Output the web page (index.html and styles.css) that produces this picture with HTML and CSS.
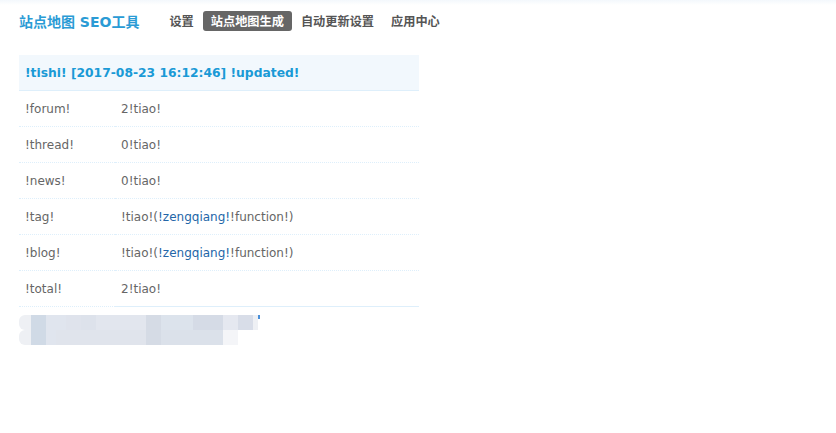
FILE: index.html
```html
<!DOCTYPE html>
<html lang="zh-CN">
<head>
    <meta charset="UTF-8">
    <meta name="viewport" content="width=device-width, initial-scale=1.0">
    <title>站点地图 SEO工具</title>
    <link rel="stylesheet" href="styles.css">
</head>
<body>

    <div class="topbar">
        <h1 class="brand">站点地图 SEO工具</h1>
        <ul class="nav">
            <li><a href="#">设置</a></li>
            <li class="active"><a href="#">站点地图生成</a></li>
            <li><a href="#">自动更新设置</a></li>
            <li><a href="#">应用中心</a></li>
        </ul>
    </div>

    <div class="main">
        <table class="tb">
            <thead>
                <tr>
                    <th colspan="2">!tishi! [2017-08-23 16:12:46] !updated!</th>
                </tr>
            </thead>
            <tbody>
                <tr><td class="td1">!forum!</td><td>2!tiao!</td></tr>
                <tr><td class="td1">!thread!</td><td>0!tiao!</td></tr>
                <tr><td class="td1">!news!</td><td>0!tiao!</td></tr>
                <tr><td class="td1">!tag!</td><td>!tiao!(<a href="#">!zengqiang!</a>!function!)</td></tr>
                <tr><td class="td1">!blog!</td><td>!tiao!(<a href="#">!zengqiang!</a>!function!)</td></tr>
                <tr class="last"><td class="td1">!total!</td><td>2!tiao!</td></tr>
            </tbody>
        </table>

        <!-- blurred copyright line -->
        <div class="blur">
            <div class="blur-row">
                <span class="b0"></span><span class="b1"></span><span class="b2"></span><span class="b3"></span>
                <span class="b4"></span><span class="b5"></span><span class="b6"></span><span class="b7"></span>
                <span class="b8"></span><span class="b9"></span><span class="b10"></span><span class="b11"></span>
                <span class="tick"></span>
            </div>
            <div class="blur-row">
                <span class="b0"></span><span class="b1"></span><span class="c2"></span><span class="c3"></span>
                <span class="b6"></span><span class="c4"></span><span class="c5"></span>
            </div>
        </div>
    </div>

</body>
</html>
```

FILE: styles.css
```css
body {
    margin: 0;
    padding: 0;
    font-family: Tahoma, "DejaVu Sans", sans-serif;
    font-size: 12px;
    color: #666;
    background: #fff;
}
a {
    text-decoration: none;
}
.topbar {
    display: flex;
    align-items: center;
    height: 42px;
    padding: 0 19px;
    background: linear-gradient(#f3f8fc 0, #fff 5px);
}
.brand {
    margin: 0 22px 0 0;
    font-family: "DejaVu Sans", "Noto Sans CJK SC", sans-serif;
    font-size: 14px;
    font-weight: bold;
    color: #2a9bd5;
}
.nav {
    display: flex;
    gap: 1px;
    margin: 0;
    padding: 0;
    list-style: none;
}
.nav li a {
    display: block;
    padding: 0 8px;
    height: 20px;
    line-height: 20px;
    font-family: "Noto Sans CJK SC", sans-serif;
    font-size: 12.2px;
    font-weight: bold;
    color: #555;
    border-radius: 3px;
}
.nav li.active a {
    background: #666;
    color: #fff;
}
.main {
    padding: 13px 19px 0;
}
.tb {
    width: 400px;
    border-collapse: collapse;
}
.tb th {
    height: 35px;
    padding: 0 6px;
    text-align: left;
    font-size: 12.3px;
    font-weight: bold;
    color: #1a9ad6;
    background: #f2f8fd;
    border-bottom: 1px solid #deeffb;
}
.tb td {
    height: 35px;
    padding: 0 6px;
    border-bottom: 1px dotted #deeffb;
    color: #666;
}
.tb td.td1 {
    width: 84px;
}
.tb tr.last td {
    border-bottom-style: solid;
}
.tb tr.last td.td1,
.tb tbody tr:first-child td.td1 {
    border-bottom-style: dotted;
}
.tb td a {
    color: #2366a8;
}
.blur {
    margin-top: 8px;
    filter: blur(0.6px);
}
.blur-row {
    display: flex;
    height: 15px;
}
.blur-row span {
    display: block;
    height: 15px;
}
.b0 { width: 12px; background: #eef0f4; border-radius: 6px 0 0 6px; }
.b1 { width: 15px; background: #d0dae6; }
.b2 { width: 20px; background: #e0e5ee; }
.b3 { width: 15px; background: #dfe3ec; }
.b4 { width: 15px; background: #dde2eb; }
.b5 { width: 50px; background: #e2e6ee; }
.b6 { width: 15px; background: #d5dbe5; }
.b7 { width: 32px; background: #dce3ec; }
.b8 { width: 30px; background: #d5dbe6; }
.b9 { width: 15px; background: #e5e8f0; }
.b10 { width: 15px; background: #d8dde8; }
.b11 { width: 5px; background: #eef0f4; }
.blur-row span.tick { width: 2px; height: 4px; background: #4a90d9; }
.c2 { width: 10px; background: #e0e5ee; }
.c3 { width: 90px; background: #e0e4ec; }
.c4 { width: 62px; background: #dbe1ea; }
.c5 { width: 15px; background: #f4f5f8; }
```
